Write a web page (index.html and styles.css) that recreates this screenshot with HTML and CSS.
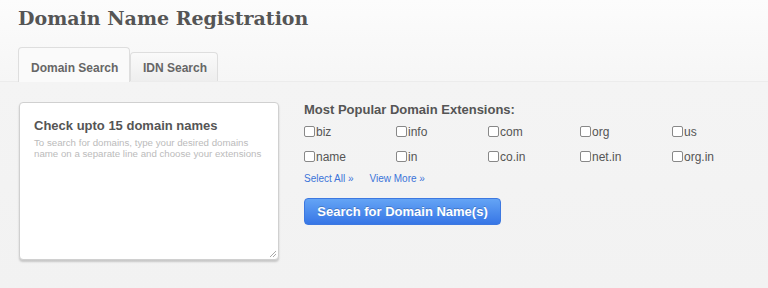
FILE: index.html
```html
<!DOCTYPE html>
<html>
<head>
<meta charset="utf-8">
<link rel="stylesheet" href="styles.css">
</head>
<body>
<div class="page">
  <h1 class="title">Domain Name Registration</h1>
  <div class="tabs">
    <div class="tab active">Domain Search</div>
    <div class="tab">IDN Search</div>
  </div>
  <div class="panel">
    <div class="box">
      <div class="box-title">Check upto 15 domain names</div>
      <div class="box-hint">To search for domains, type your desired domains name on a separate line and choose your extensions</div>
      <svg class="grip" width="8" height="8" viewBox="0 0 8 8"><path d="M7 1L1 7M7 4L4 7" stroke="#aaa" stroke-width="1"/></svg>
    </div>
    <div class="exts">
      <div class="exts-title">Most Popular Domain Extensions:</div>
      <div class="grid">
        <label class="ext"><span class="cb"></span>biz</label>
        <label class="ext"><span class="cb"></span>info</label>
        <label class="ext"><span class="cb"></span>com</label>
        <label class="ext"><span class="cb"></span>org</label>
        <label class="ext"><span class="cb"></span>us</label>
        <label class="ext"><span class="cb"></span>name</label>
        <label class="ext"><span class="cb"></span>in</label>
        <label class="ext"><span class="cb"></span>co.in</label>
        <label class="ext"><span class="cb"></span>net.in</label>
        <label class="ext"><span class="cb"></span>org.in</label>
      </div>
      <div class="links">
        <a class="link">Select All »</a>
        <a class="link">View More »</a>
      </div>
      <button class="btn">Search for Domain Name(s)</button>
    </div>
  </div>
</div>
</body>
</html>
```

FILE: styles.css
```css
html, body {
  margin: 0;
  padding: 0;
  background: #f3f3f3;
}
body {
  width: 768px;
  height: 288px;
  overflow: hidden;
  font-family: "Liberation Sans", Arial, sans-serif;
}
.page {
  background: linear-gradient(#fcfcfc, #f6f6f6 81px, #f4f4f4 82px, #f2f2f2 288px);
  height: 288px;
}
.title {
  margin: 0;
  padding: 7px 0 0 18px;
  height: 41px;
  box-sizing: border-box;
  font-family: "DejaVu Serif", serif;
  font-weight: bold;
  font-size: 19px;
  color: #555;
}
.tabs {
  display: flex;
  align-items: flex-end;
  padding-left: 18px;
  height: 41px;
  box-sizing: border-box;
  border-bottom: 1px solid #ececec;
}
.tab {
  box-sizing: border-box;
  white-space: nowrap;
  font-weight: bold;
  font-size: 12px;
  color: #666;
  border: 1px solid #dedede;
  border-bottom: none;
  border-radius: 4px 4px 0 0;
  background: linear-gradient(#fafafa, #eeeeee);
  height: 29px;
  padding: 8px 0 0 12px;
  width: 88px;
}
.tab.active {
  background: #fafafa;
  padding-top: 13px;
  width: 112px;
  margin-bottom: -1px;
  height: 35px;
}
.panel {
  display: flex;
  padding: 20px 0 0 19px;
}
.box {
  position: relative;
  box-sizing: border-box;
  width: 260px;
  height: 158px;
  background: #fff;
  border: 1px solid #d0d0d0;
  border-radius: 4px;
  box-shadow: 0 2px 2px rgba(0,0,0,0.18);
  padding: 15px 6px 15px 14px;
}
.box-title {
  font-weight: bold;
  font-size: 13px;
  color: #555;
}
.box-hint {
  margin-top: 4px;
  font-size: 9.7px;
  line-height: 11px;
  color: #bbb;
}
.grip {
  position: absolute;
  right: 1px;
  bottom: 1px;
}
.exts {
  margin-left: 25px;
}
.exts-title {
  font-weight: bold;
  font-size: 13px;
  color: #555;
}
.grid {
  display: grid;
  grid-template-columns: repeat(5, 92px);
  row-gap: 10px;
  margin-top: 7px;
}
.ext {
  display: flex;
  align-items: center;
  font-size: 12px;
  color: #555;
  height: 15px;
}
.cb {
  width: 9px;
  height: 9px;
  border: 1px solid #888;
  border-radius: 2px;
  background: #fff;
  margin-right: 1px;
}
.links {
  margin-top: 9px;
  display: flex;
  gap: 16px;
  font-size: 10px;
}
.link {
  color: #3b73d9;
}
.btn {
  margin-top: 14px;
  width: 197px;
  height: 27px;
  border: 1px solid #3d78e0;
  border-radius: 4px;
  background: linear-gradient(#64a4f5, #3776e6);
  color: #fff;
  font-family: "Liberation Sans", Arial, sans-serif;
  font-weight: bold;
  font-size: 13px;
  text-shadow: 0 -1px 0 rgba(0,0,0,0.2);
  padding: 0;
}
```
